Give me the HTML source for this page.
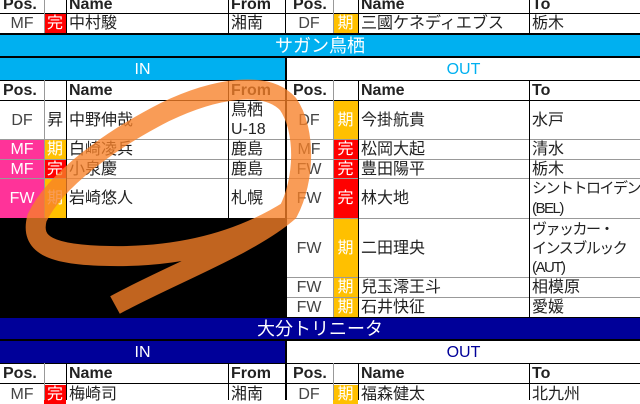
<!DOCTYPE html>
<html><head><meta charset="utf-8"><style>
body{margin:0;width:640px;height:400px;overflow:hidden;background:#fff;position:relative;font-family:"Liberation Sans","Noto Sans CJK JP",sans-serif;font-size:16px;color:#222}
.c{position:absolute;box-sizing:border-box;display:flex;align-items:center;overflow:hidden;white-space:nowrap;line-height:17px}
.ctr{justify-content:center}.l{padding-left:3px}
.h{font-weight:bold;font-size:16px}
.ln{position:absolute;background:#000}
.g{position:absolute;background:#999}
</style></head><body>
<div class="c h l" style="left:0;top:-4px;width:44px;height:17px">Pos.</div>
<div class="c h l" style="left:66px;top:-4px;width:160px;height:17px">Name</div>
<div class="c h l" style="left:228px;top:-4px;width:57px;height:17px">From</div>
<div class="c h l" style="left:290px;top:-4px;width:44px;height:17px">Pos.</div>
<div class="c h l" style="left:358px;top:-4px;width:160px;height:17px">Name</div>
<div class="c h l" style="left:529px;top:-4px;width:100px;height:17px">To</div>
<div class="c ctr" style="left:0;top:14px;width:44px;height:19px;color:#444">MF</div>
<div class="c ctr" style="left:44px;top:14px;width:22px;height:19px;background:#f00;color:#fff">完</div>
<div class="c l" style="left:66px;top:14px;width:160px;height:19px">中村駿</div>
<div class="c l" style="left:228px;top:14px;width:57px;height:19px">湘南</div>
<div class="c ctr" style="left:285px;top:14px;width:48px;height:19px;color:#444">DF</div>
<div class="c ctr" style="left:333px;top:14px;width:25px;height:19px;background:#ffc000;color:#fff">期</div>
<div class="c l" style="left:358px;top:14px;width:170px;height:19px">三國ケネディエブス</div>
<div class="c l" style="left:529px;top:14px;width:100px;height:19px">栃木</div>
<div class="c ctr" style="left:0;top:35px;width:640px;height:22px;background:#00b0f0;color:#fff;font-size:18px">サガン鳥栖</div>
<div class="c ctr" style="left:0;top:58px;width:285px;height:22px;background:#00b0f0;color:#fff;font-size:16px">IN</div>
<div class="c ctr" style="left:287px;top:58px;width:353px;height:22px;color:#00b0f0;font-size:16px">OUT</div>
<div class="c h l" style="left:0;top:81px;width:44px;height:19px">Pos.</div>
<div class="c h l" style="left:66px;top:81px;width:160px;height:19px">Name</div>
<div class="c h l" style="left:228px;top:81px;width:57px;height:19px">From</div>
<div class="c h l" style="left:290px;top:81px;width:44px;height:19px">Pos.</div>
<div class="c h l" style="left:358px;top:81px;width:160px;height:19px">Name</div>
<div class="c h l" style="left:529px;top:81px;width:100px;height:19px">To</div>
<div class="c ctr" style="left:0;top:101px;width:44px;height:38px;color:#444">DF</div>
<div class="c ctr" style="left:44px;top:101px;width:22px;height:38px">昇</div>
<div class="c l" style="left:66px;top:101px;width:160px;height:38px">中野伸哉</div>
<div class="c l" style="left:228px;top:101px;width:57px;height:38px;white-space:normal;line-height:19px">鳥栖<br>U-18</div>
<div class="c ctr" style="left:0;top:140px;width:44px;height:19px;background:#ff3399;color:#fff">MF</div>
<div class="c ctr" style="left:44px;top:140px;width:22px;height:19px;background:#ffc000;color:#fff">期</div>
<div class="c l" style="left:66px;top:140px;width:160px;height:19px">白崎凌兵</div>
<div class="c l" style="left:228px;top:140px;width:57px;height:19px">鹿島</div>
<div class="c ctr" style="left:0;top:160px;width:44px;height:18px;background:#ff3399;color:#fff">MF</div>
<div class="c ctr" style="left:44px;top:160px;width:22px;height:18px;background:#f00;color:#fff">完</div>
<div class="c l" style="left:66px;top:160px;width:160px;height:18px">小泉慶</div>
<div class="c l" style="left:228px;top:160px;width:57px;height:18px">鹿島</div>
<div class="c ctr" style="left:0;top:179px;width:44px;height:39px;background:#ff3399;color:#fff">FW</div>
<div class="c ctr" style="left:44px;top:179px;width:22px;height:39px;background:#ffc000;color:#fff">期</div>
<div class="c l" style="left:66px;top:179px;width:160px;height:39px">岩崎悠人</div>
<div class="c l" style="left:228px;top:179px;width:57px;height:39px">札幌</div>
<div style="position:absolute;left:0;top:218px;width:286px;height:100px;background:#000"></div>
<div class="c ctr" style="left:285px;top:101px;width:48px;height:38px;color:#444">DF</div>
<div class="c ctr" style="left:333px;top:101px;width:25px;height:38px;background:#ffc000;color:#fff">期</div>
<div class="c l" style="left:358px;top:101px;width:170px;height:38px">今掛航貴</div>
<div class="c l" style="left:529px;top:101px;width:110px;height:38px">水戸</div>
<div class="c ctr" style="left:285px;top:140px;width:48px;height:19px;color:#444">MF</div>
<div class="c ctr" style="left:333px;top:140px;width:25px;height:19px;background:#f00;color:#fff">完</div>
<div class="c l" style="left:358px;top:140px;width:170px;height:19px">松岡大起</div>
<div class="c l" style="left:529px;top:140px;width:110px;height:19px">清水</div>
<div class="c ctr" style="left:285px;top:160px;width:48px;height:18px;color:#444">FW</div>
<div class="c ctr" style="left:333px;top:160px;width:25px;height:18px;background:#f00;color:#fff">完</div>
<div class="c l" style="left:358px;top:160px;width:170px;height:18px">豊田陽平</div>
<div class="c l" style="left:529px;top:160px;width:110px;height:18px">栃木</div>
<div class="c ctr" style="left:285px;top:179px;width:48px;height:39px;color:#444">FW</div>
<div class="c ctr" style="left:333px;top:179px;width:25px;height:39px;background:#f00;color:#fff">完</div>
<div class="c l" style="left:358px;top:179px;width:170px;height:39px">林大地</div>
<div class="c l" style="left:529px;top:179px;width:111px;height:39px;white-space:normal;line-height:20px;letter-spacing:-1.5px;font-size:15px">シントトロイデン<br>(BEL)</div>
<div class="c ctr" style="left:285px;top:219px;width:48px;height:58px;color:#444">FW</div>
<div class="c ctr" style="left:333px;top:219px;width:25px;height:58px;background:#ffc000;color:#fff">期</div>
<div class="c l" style="left:358px;top:219px;width:170px;height:58px">二田理央</div>
<div class="c l" style="left:529px;top:219px;width:111px;height:58px;white-space:normal;line-height:19px;letter-spacing:-1.5px;font-size:15px">ヴァッカー・<br>インスブルック<br>(AUT)</div>
<div class="c ctr" style="left:285px;top:278px;width:48px;height:19px;color:#444">FW</div>
<div class="c ctr" style="left:333px;top:278px;width:25px;height:19px;background:#ffc000;color:#fff">期</div>
<div class="c l" style="left:358px;top:278px;width:170px;height:19px">兒玉澪王斗</div>
<div class="c l" style="left:529px;top:278px;width:110px;height:19px">相模原</div>
<div class="c ctr" style="left:285px;top:298px;width:48px;height:19px;color:#444">FW</div>
<div class="c ctr" style="left:333px;top:298px;width:25px;height:19px;background:#ffc000;color:#fff">期</div>
<div class="c l" style="left:358px;top:298px;width:170px;height:19px">石井快征</div>
<div class="c l" style="left:529px;top:298px;width:110px;height:19px">愛媛</div>
<div class="c ctr" style="left:0;top:318px;width:640px;height:22px;background:#000099;color:#fff;font-size:18px">大分トリニータ</div>
<div class="c ctr" style="left:0;top:341px;width:285px;height:22px;background:#000099;color:#fff;font-size:16px">IN</div>
<div class="c ctr" style="left:287px;top:341px;width:353px;height:22px;color:#000099;font-size:16px">OUT</div>
<div class="c h l" style="left:0;top:364px;width:44px;height:19px">Pos.</div>
<div class="c h l" style="left:66px;top:364px;width:160px;height:19px">Name</div>
<div class="c h l" style="left:228px;top:364px;width:57px;height:19px">From</div>
<div class="c h l" style="left:290px;top:364px;width:44px;height:19px">Pos.</div>
<div class="c h l" style="left:358px;top:364px;width:160px;height:19px">Name</div>
<div class="c h l" style="left:529px;top:364px;width:100px;height:19px">To</div>
<div class="c ctr" style="left:0;top:385px;width:44px;height:19px;color:#444">MF</div>
<div class="c ctr" style="left:44px;top:385px;width:22px;height:19px;background:#f00;color:#fff">完</div>
<div class="c l" style="left:66px;top:385px;width:160px;height:19px">梅崎司</div>
<div class="c l" style="left:228px;top:385px;width:57px;height:19px">湘南</div>
<div class="c ctr" style="left:285px;top:385px;width:48px;height:19px;color:#444">DF</div>
<div class="c ctr" style="left:333px;top:385px;width:25px;height:19px;background:#ffc000;color:#fff">期</div>
<div class="c l" style="left:358px;top:385px;width:170px;height:19px">福森健太</div>
<div class="c l" style="left:529px;top:385px;width:110px;height:19px">北九州</div>
<div class="ln" style="left:0;top:13px;width:640px;height:1px"></div>
<div class="ln" style="left:0;top:33px;width:640px;height:2px"></div>
<div class="ln" style="left:0;top:56px;width:640px;height:2px"></div>
<div class="ln" style="left:0;top:80px;width:640px;height:1px"></div>
<div class="ln" style="left:0;top:100px;width:640px;height:1px"></div>
<div class="g" style="left:0;top:139px;width:640px;height:1px"></div>
<div class="g" style="left:0;top:159px;width:640px;height:1px"></div>
<div class="g" style="left:0;top:178px;width:640px;height:1px"></div>
<div class="g" style="left:286px;top:218px;width:354px;height:1px"></div>
<div class="g" style="left:286px;top:277px;width:354px;height:1px"></div>
<div class="g" style="left:286px;top:297px;width:354px;height:1px"></div>
<div class="ln" style="left:0;top:317px;width:640px;height:1px"></div>
<div class="ln" style="left:0;top:339px;width:640px;height:2px"></div>
<div class="ln" style="left:0;top:363px;width:640px;height:1px"></div>
<div class="ln" style="left:0;top:383px;width:640px;height:1px"></div>
<div class="ln" style="left:285px;top:0;width:1px;height:34px"></div>
<div class="ln" style="left:285px;top:56px;width:2px;height:262px"></div>
<div class="ln" style="left:285px;top:340px;width:2px;height:60px"></div>
<div class="g" style="left:44px;top:0;width:1px;height:33px"></div>
<div class="ln" style="left:66px;top:0;width:1px;height:33px"></div>
<div class="ln" style="left:228px;top:0;width:1px;height:33px"></div>
<div class="g" style="left:333px;top:0;width:1px;height:33px"></div>
<div class="ln" style="left:358px;top:0;width:1px;height:33px"></div>
<div class="ln" style="left:529px;top:0;width:1px;height:33px"></div>
<div class="g" style="left:44px;top:80px;width:1px;height:138px"></div>
<div class="ln" style="left:66px;top:80px;width:1px;height:138px"></div>
<div class="ln" style="left:228px;top:80px;width:1px;height:138px"></div>
<div class="g" style="left:333px;top:80px;width:1px;height:237px"></div>
<div class="ln" style="left:358px;top:80px;width:1px;height:237px"></div>
<div class="ln" style="left:529px;top:80px;width:1px;height:237px"></div>
<div class="g" style="left:44px;top:363px;width:1px;height:37px"></div>
<div class="ln" style="left:66px;top:363px;width:1px;height:37px"></div>
<div class="ln" style="left:228px;top:363px;width:1px;height:37px"></div>
<div class="g" style="left:333px;top:363px;width:1px;height:37px"></div>
<div class="ln" style="left:358px;top:363px;width:1px;height:37px"></div>
<div class="ln" style="left:529px;top:363px;width:1px;height:37px"></div>
<svg style="position:absolute;left:0;top:0" width="640" height="400">
<path d="M115,305 C170,275 250,245 288,212 C305,180 306,130 288,104 C266,80 215,88 165,112 C110,140 55,180 37,218 C30,245 50,255 110,256 C165,257 230,248 290,210" fill="none" stroke="rgb(247,128,40)" stroke-width="20" stroke-opacity="0.78" stroke-linecap="butt" stroke-linejoin="round"/>
</svg>
</body></html>
